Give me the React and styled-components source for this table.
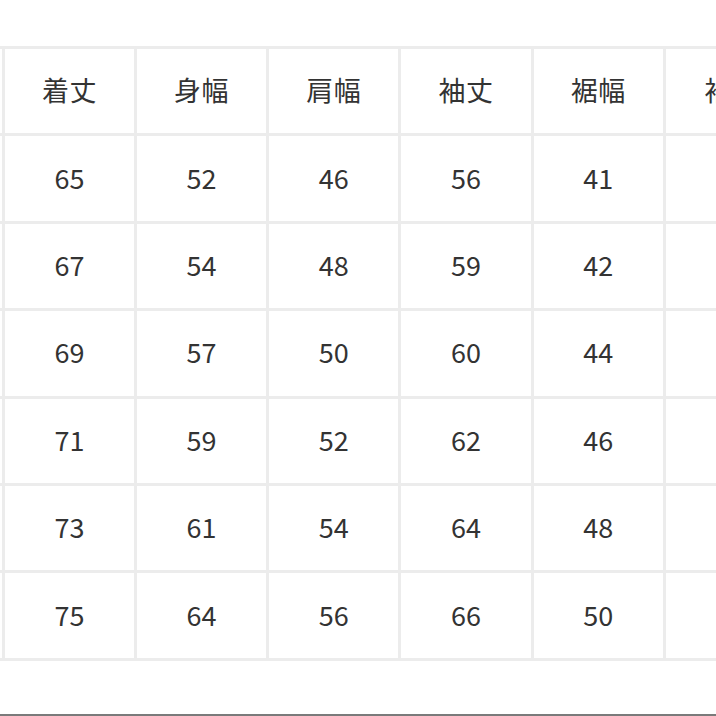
import styled, { createGlobalStyle } from "styled-components";

const GlobalStyle = createGlobalStyle`
  html, body {
    margin: 0;
    padding: 0;
    background: #fff;
  }
  body {
    font-family: "Noto Sans CJK JP", "Noto Sans", sans-serif;
  }
`;

const Page = styled.div`
  width: 716px;
  height: 716px;
  overflow: hidden;
  display: flex;
  flex-direction: column;
  background: #fff;
`;

const TableWrap = styled.div`
  padding-top: 46px;
  margin-left: -130.4px;
`;

const Table = styled.div`
  display: grid;
  grid-template-columns: repeat(${(p) => p.$cols - 1}, 129.2px) 160px;
  grid-auto-rows: 84.4px;
  gap: 3px;
  padding: 3px;
  width: max-content;
  background: #ececec;
`;

const Cell = styled.div`
  background: #fff;
  display: flex;
  align-items: center;
  justify-content: center;
  padding-bottom: 3px;
  color: #333;
  font-size: 27px;
  letter-spacing: ${(p) => (p.$head ? "0.5px" : "0")};
  white-space: nowrap;
`;

const Spacer = styled.div`
  flex: 1;
`;

const BottomLine = styled.div`
  height: 2px;
  background: #7a7a7a;
`;

const heads = ["サイズ", "着丈", "身幅", "肩幅", "袖丈", "裾幅", "袖口幅"];

const rows = [
  ["S", 65, 52, 46, 56, 41, 20],
  ["M", 67, 54, 48, 59, 42, 21],
  ["L", 69, 57, 50, 60, 44, 22],
  ["XL", 71, 59, 52, 62, 46, 23],
  ["2XL", 73, 61, 54, 64, 48, 24],
  ["3XL", 75, 64, 56, 66, 50, 25],
];

export default function App() {
  return (
    <Page>
      <GlobalStyle />
      <TableWrap>
        <Table $cols={heads.length}>
          {heads.map((h) => (
            <Cell key={h} $head>
              {h}
            </Cell>
          ))}
          {rows.map((r) =>
            r.map((v, i) => <Cell key={r[0] + "-" + i}>{v}</Cell>)
          )}
        </Table>
      </TableWrap>
      <Spacer />
      <BottomLine />
    </Page>
  );
}
